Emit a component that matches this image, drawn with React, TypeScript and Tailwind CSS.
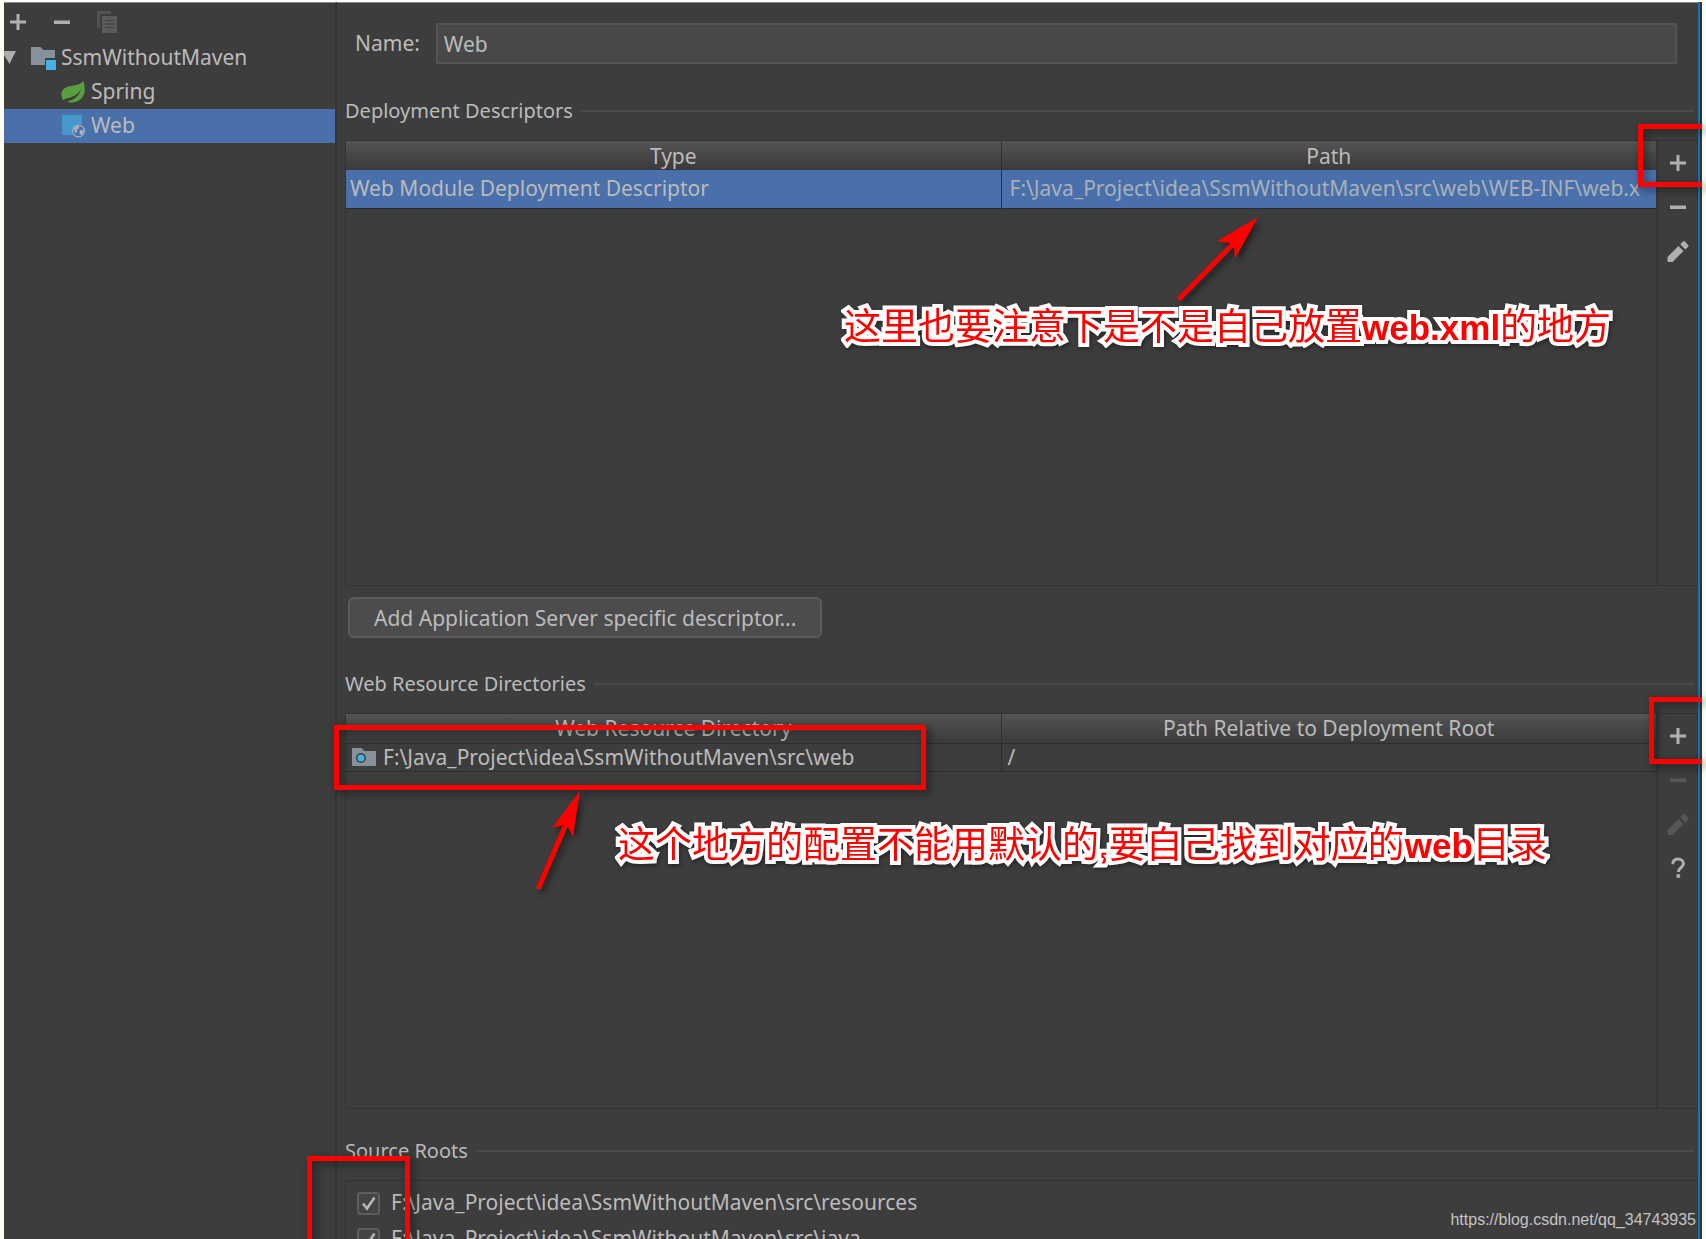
import React, { useState } from 'react';

const treeItems = [
  { id: 'spring', label: 'Spring' },
  { id: 'web', label: 'Web' },
];

const initialRoots = [
  { path: 'F:\\Java_Project\\idea\\SsmWithoutMaven\\src\\resources', checked: true },
  { path: 'F:\\Java_Project\\idea\\SsmWithoutMaven\\src\\java', checked: true },
];

const PlusIcon = () => (
  <svg width="18" height="18" viewBox="0 0 18 18" fill="currentColor" aria-hidden="true">
    <path d="M7.5 1h3v6.5H17v3h-6.5V17h-3v-6.5H1v-3h6.5z" />
  </svg>
);

const MinusIcon = () => (
  <svg width="18" height="18" viewBox="0 0 18 18" fill="currentColor" aria-hidden="true">
    <path d="M1 7.5h16v3.5H1z" />
  </svg>
);

const CopyIcon = () => (
  <svg width="22" height="22" viewBox="0 0 22 22" aria-hidden="true">
    <path d="M0 0h14v3H3v14H0z" fill="#515151" />
    <path d="M5 5h15v17H5z" fill="#5a5a5a" />
    <path d="M8 9.500h9M8 13h9M8 16.500h9" stroke="#3f3f3f" strokeWidth="1.200" />
  </svg>
);

const PencilIcon = () => (
  <svg width="24" height="24" viewBox="0 0 24 24" fill="currentColor" aria-hidden="true">
    <path d="M1.500 18 12.500 7l5 5-11 11H2.500Q1.500 23 1.500 22z" />
    <path d="m14.200 5.300 2.800-2.800q.9-.8 1.800 0l3.400 3.400q.8.900 0 1.800l-2.800 2.800z" />
  </svg>
);

const HelpIcon = () => (
  <svg width="18" height="22" viewBox="0 0 18 22" aria-hidden="true">
    <path
      d="M3.700 7.200C3.700 3.700 5.800 2 9 2s5.400 1.900 5.400 4.700c0 3.500-5.100 4.300-5.100 8.300"
      fill="none"
      stroke="currentColor"
      strokeWidth="3"
    />
    <path d="M7.500 17.300h3.600v3.500H7.500z" fill="currentColor" />
  </svg>
);

const ModuleIcon = () => (
  <svg width="26" height="24" viewBox="0 0 26 24" aria-hidden="true">
    <path d="M0 1h9.500l3 3H24v8H14v7H0z" fill="#87919b" />
    <path d="M15 14h10v10H15z" fill="#40b2e4" />
  </svg>
);

const SpringIcon = () => (
  <svg width="26" height="24" viewBox="0 0 26 24" aria-hidden="true">
    <path
      d="M22.300 1C24.600 8.500 24.400 15 20 19c-4.300 3.900-10.500 4-14.200 2.500C12.500 20.500 18.500 16 19.700 9.800 16 15.500 10.500 17.500 4.500 18.800c-1 .3-1.300 1.500-2.200 1.400C-1 15 0 9.500 5.500 7.200 10.500 5 18 6.500 22.300 1z"
      fill="#58a03f"
    />
  </svg>
);

const WebIcon = () => (
  <svg width="26" height="24" viewBox="0 0 26 24" aria-hidden="true">
    <path d="M1 1h20v9.500a7.500 7.500 0 0 0-9 10.500H1z" fill="#4498cd" />
    <circle cx="17.500" cy="17" r="5.800" fill="none" stroke="#a9b3bf" strokeWidth="1.300" />
    <path d="m12.500 14 5-2.500 1 2.500-2.500 1.500.5 2.500-2 1zM19 16l4 .5-2 4.500-2.500-1z" fill="#a9b3bf" />
  </svg>
);

const WebFolderIcon = () => (
  <svg width="24" height="20" viewBox="0 0 24 20" className="shrink-0" aria-hidden="true">
    <path d="M0 1h9.500l3 3H24v15H0z" fill="#87919b" />
    <circle cx="9" cy="11" r="5" fill="#3c4043" />
    <circle cx="9" cy="11" r="3.500" fill="#40b2e4" />
  </svg>
);

const SectionTitle: React.FC<{ children: string }> = ({ children }) => (
  <div className="flex items-center gap-2 pr-1 h-7">
    <h2 className="text-[20px] leading-7 whitespace-nowrap">{children}</h2>
    <span className="h-[2px] flex-1 bg-[#4a4a4a]" />
  </div>
);

interface ToolButtonProps {
  label: string;
  disabled?: boolean;
  children: React.ReactNode;
}

const ToolButton: React.FC<ToolButtonProps> = ({ label, disabled, children }) => (
  <button
    type="button"
    aria-label={label}
    disabled={disabled}
    className="flex h-11 w-full items-center justify-center text-[#b0b0b0] disabled:text-[#565656]"
  >
    {children}
  </button>
);

const headCell = 'h-[29px] p-0 bg-linear-to-b from-[#545454] to-[#3a3a3a] font-normal text-center leading-7';

export default function App() {
  const [name, setName] = useState('Web');
  const [roots, setRoots] = useState(initialRoots);

  const toggleRoot = (path: string) =>
    setRoots(roots.map((r) => (r.path === path ? { ...r, checked: !r.checked } : r)));

  return (
    <div className="relative h-screen overflow-hidden bg-[#fdfdf2] px-1 font-['Noto_Sans','Noto_Sans_CJK_SC',sans-serif] text-[21px] text-[#bbbbbb]">
      <div className="flex h-full border-t-2 border-white">
        <aside className="w-[333px] shrink-0 border-t border-r-2 border-t-[#8a8a8a] border-r-[#353535] bg-[#3d3d3d]">
          <div className="flex h-[38px] items-center gap-[26px] pl-[5px] text-[#b0b0b0]">
            <button type="button" aria-label="Add"><PlusIcon /></button>
            <button type="button" aria-label="Remove"><MinusIcon /></button>
            <button type="button" aria-label="Copy" disabled><CopyIcon /></button>
          </div>
          <ul>
            <li>
              <button type="button" className="flex h-[34px] w-full items-center">
                <svg width="13" height="14" viewBox="0 0 13 14" className="mr-[14px]" aria-hidden="true">
                  <path d="M0 0h12L5.500 13 0 4z" fill="#adadad" />
                </svg>
                <ModuleIcon />
                <span className="ml-1">SsmWithoutMaven</span>
              </button>
              <ul>
                {treeItems.map((item) => (
                  <li key={item.id}>
                    <button
                      type="button"
                      className={`flex h-[34px] w-full items-center gap-1 pl-[57px] ${item.id === 'web' ? 'bg-[#4970ab]' : ''}`}
                    >
                      {item.id === 'web' ? <WebIcon /> : <SpringIcon />}
                      {item.label}
                    </button>
                  </li>
                ))}
              </ul>
            </li>
          </ul>
        </aside>

        <main className="min-w-0 flex-1 border-t border-t-[#8a8a8a] bg-[#3d3d3d] pl-2">
          <div className="mt-5 flex items-center gap-4 pr-[21px] pl-[10px]">
            <label htmlFor="facet-name">Name:</label>
            <input
              id="facet-name"
              value={name}
              onChange={(e) => setName(e.target.value)}
              className="h-[41px] min-w-0 flex-1 border-2 border-[#545454] bg-[#484848] px-[6px] outline-none"
            />
          </div>

          <section className="mt-[33px]">
            <SectionTitle>Deployment Descriptors</SectionTitle>
            <div className="mt-[15px] flex min-h-[446px] border border-[#333333]">
              <div className="min-w-0 flex-1">
                <table className="w-full table-fixed border-collapse">
                  <thead>
                    <tr>
                      <th className={`${headCell} border-r border-[#2f2f2f]`}>Type</th>
                      <th className={headCell}>Path</th>
                    </tr>
                  </thead>
                  <tbody>
                    <tr className="h-[38px] border-b border-[#2b2b2b] bg-[#4970ab]">
                      <td className="border-r border-[#2f2f2f] px-1 py-0">Web Module Deployment Descriptor</td>
                      <td className="overflow-hidden py-0 pl-2 whitespace-nowrap text-[#a9b0b8]">
                        F:\Java_Project\idea\SsmWithoutMaven\src\web\WEB-INF\web.x
                      </td>
                    </tr>
                  </tbody>
                </table>
              </div>
              <div className="flex w-[41px] shrink-0 flex-col border-l-2 border-[#353535]">
                <ToolButton label="Add descriptor"><PlusIcon /></ToolButton>
                <ToolButton label="Remove descriptor"><MinusIcon /></ToolButton>
                <ToolButton label="Edit descriptor"><PencilIcon /></ToolButton>
              </div>
            </div>
            <button
              type="button"
              className="mt-[11px] ml-[3px] h-[41px] rounded-md border-2 border-[#5b5b5b] bg-[#4c4c4c] px-6 leading-8"
            >
              Add Application Server specific descriptor...
            </button>
          </section>

          <section className="mt-8">
            <SectionTitle>Web Resource Directories</SectionTitle>
            <div className="mt-[15px] flex min-h-[396px] border border-[#333333]">
              <div className="min-w-0 flex-1">
                <table className="w-full table-fixed border-collapse">
                  <thead>
                    <tr>
                      <th className={`${headCell} border-r border-[#2f2f2f]`}>Web Resource Directory</th>
                      <th className={headCell}>Path Relative to Deployment Root</th>
                    </tr>
                  </thead>
                  <tbody>
                    <tr className="h-7 border-y border-[#2f2f2f]">
                      <td className="border-r border-[#2f2f2f] py-0 pl-[6px] leading-6">
                        <div className="flex items-center gap-[7px]">
                          <WebFolderIcon />
                          F:\Java_Project\idea\SsmWithoutMaven\src\web
                        </div>
                      </td>
                      <td className="py-0 pl-[6px] leading-6">/</td>
                    </tr>
                  </tbody>
                </table>
              </div>
              <div className="flex w-[41px] shrink-0 flex-col border-l-2 border-[#353535]">
                <ToolButton label="Add directory"><PlusIcon /></ToolButton>
                <ToolButton label="Remove directory" disabled><MinusIcon /></ToolButton>
                <ToolButton label="Edit directory" disabled><PencilIcon /></ToolButton>
                <ToolButton label="Help"><HelpIcon /></ToolButton>
              </div>
            </div>
          </section>

          <section className="mt-7">
            <SectionTitle>Source Roots</SectionTitle>
            <div className="mt-[15px] border border-[#333333] pt-1 pl-[11px]">
              {roots.map((root) => (
                <label key={root.path} className="flex h-9 items-center gap-[11px]">
                  <span className="relative h-[23px] w-[23px]">
                    <input
                      type="checkbox"
                      checked={root.checked}
                      onChange={() => toggleRoot(root.path)}
                      className="peer block h-[23px] w-[23px] appearance-none rounded border-2 border-[#5e5e5e] bg-[#444444]"
                    />
                    <svg
                      viewBox="0 0 23 23"
                      className="pointer-events-none absolute inset-0 hidden peer-checked:block"
                      aria-hidden="true"
                    >
                      <path d="m6 11.500 4 5 7.500-11" fill="none" stroke="#b5b5b5" strokeWidth="2.600" />
                    </svg>
                  </span>
                  {root.path}
                </label>
              ))}
            </div>
          </section>
        </main>
        <div className="w-1 shrink-0 border-l-2 border-[#1770b8] bg-[#333333]" />
      </div>

      {/* red markup over the dialog */}
      <div className="pointer-events-none absolute inset-0 overflow-hidden text-[#ff0000]">
        <div className="absolute top-[124px] right-1 h-[63px] w-16 border-[5px] border-r-0 border-[#ff0000] drop-shadow-[3px_3px_4px_#00000080]" />
        <div className="absolute top-[697px] right-1 h-[67px] w-[53px] border-[5px] border-r-0 border-[#ff0000] drop-shadow-[3px_3px_4px_#00000080]" />
        <div className="absolute top-[725px] left-[334px] h-[65px] w-[592px] border-[5px] border-[#ff0000] drop-shadow-[3px_3px_4px_#00000080]" />
        <div className="absolute top-[1156px] left-[307px] h-[120px] w-[103px] border-[5px] border-[#ff0000] drop-shadow-[3px_3px_4px_#00000080]" />
        <svg
          width="90"
          height="90"
          viewBox="0 0 90 90"
          className="absolute top-[214px] left-[1174px] drop-shadow-[3px_4px_3px_#00000080]"
          aria-hidden="true"
        >
          <path d="M6 84 60 29" stroke="#ff0000" strokeWidth="5" strokeLinecap="round" />
          <path d="M84 3 43 27l12 2 5 5 1 11z" fill="#ff0000" />
        </svg>
        <svg
          width="52"
          height="108"
          viewBox="0 0 52 108"
          className="absolute top-[788px] left-[532px] drop-shadow-[3px_4px_3px_#00000080]"
          aria-hidden="true"
        >
          <path d="M7 99 34 36" stroke="#ff0000" strokeWidth="5" strokeLinecap="round" />
          <path d="M48 3 20 40l11-3 5 2 5 10z" fill="#ff0000" />
        </svg>
        <p className="absolute top-[302px] left-[844px] text-[37px] leading-[52px] whitespace-nowrap font-['Liberation_Sans','Noto_Sans_CJK_SC',sans-serif] [paint-order:stroke] [stroke-linejoin:round] [-webkit-text-stroke:8px_white] drop-shadow-[1px_2px_2px_#00000066]">
          这里也要注意下是不是自己放置<b className="text-[35px]">web.xml</b>的地方
        </p>
        <p className="absolute top-[820px] left-[618px] text-[37px] leading-[52px] whitespace-nowrap font-['Liberation_Sans','Noto_Sans_CJK_SC',sans-serif] [paint-order:stroke] [stroke-linejoin:round] [-webkit-text-stroke:8px_white] drop-shadow-[1px_2px_2px_#00000066]">
          这个地方的配置不能用默认的<b className="text-[35px]">,</b>要自己找到对应的<b className="text-[35px]">web</b>目录
        </p>
      </div>
      <p className="absolute right-[10px] bottom-[7px] font-['Liberation_Sans',sans-serif] text-[16px] leading-6 text-[#c4c4c4]">
        https://blog.csdn.net/qq_34743935
      </p>
    </div>
  );
}
